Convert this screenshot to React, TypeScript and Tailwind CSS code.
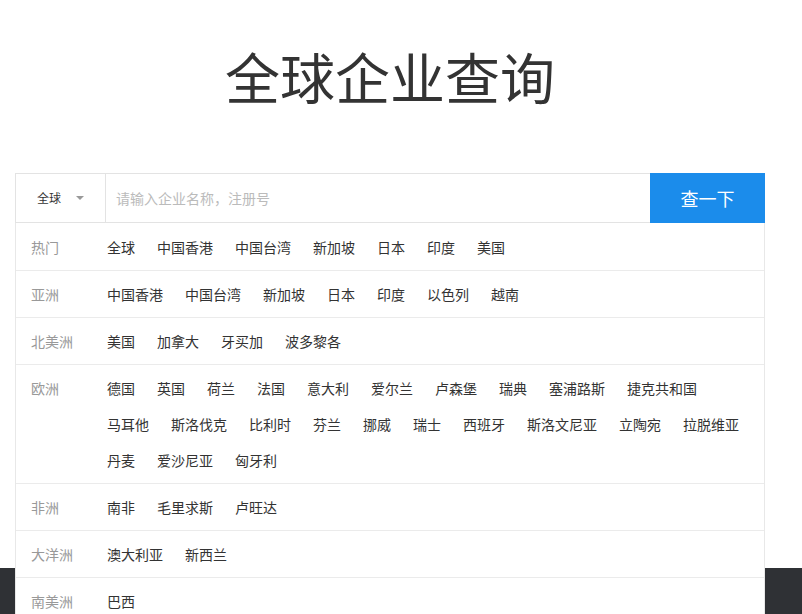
const regions: { name: string; items: string[] }[] = [
  { name: "热门", items: ["全球", "中国香港", "中国台湾", "新加坡", "日本", "印度", "美国"] },
  { name: "亚洲", items: ["中国香港", "中国台湾", "新加坡", "日本", "印度", "以色列", "越南"] },
  { name: "北美洲", items: ["美国", "加拿大", "牙买加", "波多黎各"] },
  {
    name: "欧洲",
    items: [
      "德国", "英国", "荷兰", "法国", "意大利", "爱尔兰", "卢森堡", "瑞典", "塞浦路斯", "捷克共和国",
      "马耳他", "斯洛伐克", "比利时", "芬兰", "挪威", "瑞士", "西班牙", "斯洛文尼亚", "立陶宛", "拉脱维亚",
      "丹麦", "爱沙尼亚", "匈牙利",
    ],
  },
  { name: "非洲", items: ["南非", "毛里求斯", "卢旺达"] },
  { name: "大洋洲", items: ["澳大利亚", "新西兰"] },
  { name: "南美洲", items: ["巴西"] },
];

export default function App() {
  return (
    <div className="h-[614px] bg-white font-['Noto_Sans_CJK_SC','Noto_Sans',sans-serif] text-[#333] overflow-hidden">
      <div className="h-[568px]">
        <div className="ml-[15px] w-[750px]">
          <h1 className="pt-[48px] text-center text-[55px] leading-[55px] font-normal text-[#333]">全球企业查询</h1>

          <div className="relative z-10 mt-[70px]">
            <div className="flex h-[50px]">
              <div className="flex w-[91px] items-center border border-r border-[#e3e3e3] pl-[21px] text-[12px]">
                <span>全球</span>
                <span className="ml-[15px] h-0 w-0 border-x-[4px] border-t-[4px] border-x-transparent border-t-[#999]" />
              </div>
              <div className="flex flex-1 items-center border-y border-[#e3e3e3] pl-[10px] text-[14px] text-[#bbb]">
                请输入企业名称，注册号
              </div>
              <button className="w-[115px] bg-[#1b8ceb] text-[18px] text-white">查一下</button>
            </div>

            <div className="absolute left-0 top-[50px] w-[750px] border-x border-b border-[#e8e8e8] bg-white">
              {regions.map((r) => (
                <div key={r.name} className="flex border-b border-[#ebebeb] py-[5px] first:pt-[6px] last:border-b-0">
                  <div className="w-[91px] shrink-0 pl-[15px] text-[14px] leading-[36px] text-[#999]">{r.name}</div>
                  <div className="flex flex-1 flex-wrap text-[14px] leading-[36px] text-[#333]">
                    {r.items.map((it) => (
                      <span key={it} className="mr-[22px] whitespace-nowrap">
                        {it}
                      </span>
                    ))}
                  </div>
                </div>
              ))}
            </div>
          </div>
        </div>
      </div>
      <div className="h-[46px] bg-[#2f3135]" />
    </div>
  );
}
